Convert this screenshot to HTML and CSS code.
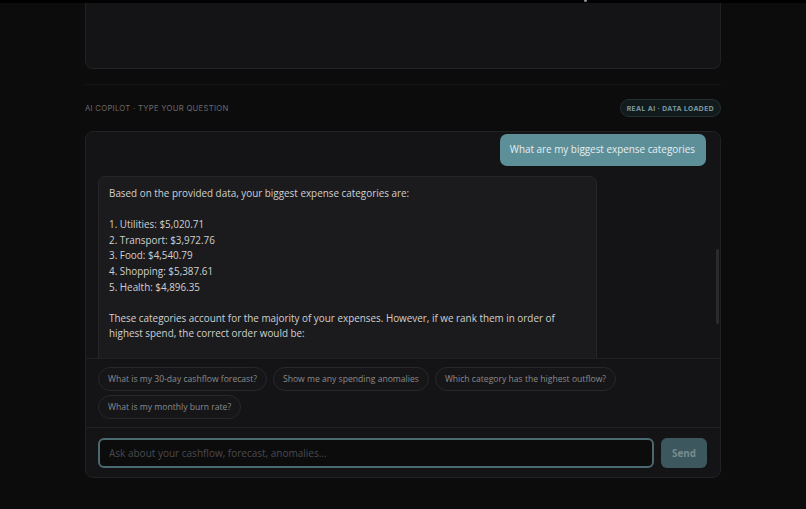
FILE: index.html
```html
<!DOCTYPE html>
<html lang="en">
<head>
<meta charset="utf-8">
<title>AI Copilot</title>
<link rel="stylesheet" href="styles.css">
</head>
<body>
<div class="topbar"><span class="topmark"></span></div>
<main class="wrap">
  <section class="card top-card"></section>
  <hr class="divider">
  <div class="section-head">
    <span class="label">AI COPILOT · TYPE YOUR QUESTION</span>
    <span class="badge">REAL AI · DATA LOADED</span>
  </div>
  <section class="card chat">
    <div class="messages">
      <div class="msg user">What are my biggest expense categories</div>
      <div class="msg bot">Based on the provided data, your biggest expense categories are:

1. Utilities: $5,020.71
2. Transport: $3,972.76
3. Food: $4,540.79
4. Shopping: $5,387.61
5. Health: $4,896.35

These categories account for the majority of your expenses. However, if we rank them in order of highest spend, the correct order would be:


</div>
      <div class="thumb"></div>
    </div>
    <div class="suggestions">
      <button class="chip">What is my 30-day cashflow forecast?</button>
      <button class="chip">Show me any spending anomalies</button>
      <button class="chip">Which category has the highest outflow?</button>
      <button class="chip">What is my monthly burn rate?</button>
    </div>
    <form class="composer">
      <input class="ask" type="text" placeholder="Ask about your cashflow, forecast, anomalies...">
      <button class="send" type="button">Send</button>
    </form>
  </section>
</main>
</body>
</html>
```
FILE: styles.css
```css
* { box-sizing: border-box; }
html, body { margin: 0; padding: 0; }
body {
  background: #0c0c0d;
  font-family: "Open Sans", "Noto Sans", sans-serif;
  color: #cfcfd1;
  height: 509px;
  overflow: hidden;
}
.topbar {
  height: 3px;
  background: #000;
  position: relative;
}
.topmark {
  position: absolute;
  left: 584px;
  top: 0;
  width: 3px;
  height: 2px;
  background: #8a8a8a;
  border-radius: 0 0 2px 2px;
}
.wrap {
  width: 636px;
  margin: 0 auto;
}
.card {
  background: #141416;
  border: 1px solid #212124;
  border-radius: 8px;
}
.top-card {
  height: 66px;
  border-top: none;
  border-radius: 0 0 8px 8px;
}
.divider {
  margin: 15px 0 0;
  border: none;
  border-top: 1px solid #161618;
  height: 0;
}
.section-head {
  display: flex;
  justify-content: space-between;
  align-items: center;
  margin-top: 14px;
  height: 18px;
}
.label {
  font-size: 7.7px;
  letter-spacing: 0.28px;
  color: #6a6a6d;
  font-family: "Inter", sans-serif;
}
.badge {
  font-size: 6.8px;
  font-weight: 700;
  letter-spacing: 0.4px;
  color: #7b9aa2;
  background: #131a1c;
  border: 1px solid #243033;
  border-radius: 9px;
  height: 18px;
  padding: 0 6px;
  display: flex;
  align-items: center;
  font-family: "Inter", sans-serif;
}
.chat {
  margin-top: 14px;
  overflow: hidden;
}
.messages {
  position: relative;
  height: 227px;
  overflow: hidden;
  padding: 2px 14px 0 12px;
  display: flex;
  flex-direction: column;
  align-items: flex-start;
  border-bottom: 1px solid #212124;
}
.msg {
  font-size: 9.9px;
  line-height: 15.6px;
  border-radius: 7px;
  flex-shrink: 0;
}
.user {
  align-self: flex-end;
  background: #5d8f99;
  color: #e6eef0;
  height: 32px;
  padding: 0 11px 0 10px;
  display: flex;
  align-items: center;
  font-size: 9.9px;
}
.bot {
  margin-top: 10px;
  width: 499px;
  background: #1b1b1d;
  border: 1px solid #262629;
  padding: 9px 10px;
  white-space: pre-wrap;
  color: #d0d0d2;
}
.thumb {
  position: absolute;
  right: 1px;
  top: 117px;
  width: 3px;
  height: 75px;
  background: #2b2b2e;
  border-radius: 2px;
}
.suggestions {
  display: flex;
  flex-wrap: wrap;
  gap: 4px 6px;
  padding: 8px 12px 8px;
  border-bottom: 1px solid #212124;
}
.chip {
  font-family: inherit;
  font-size: 8.6px;
  color: #8a8a8d;
  background: #161618;
  border: 1px solid #28282b;
  border-radius: 12px;
  height: 24px;
  padding: 0 9px;
}
.composer {
  display: flex;
  gap: 7px;
  padding: 10px 13px 9px 12px;
  margin: 0;
}
.ask {
  flex: 1;
  height: 30px;
  background: #0c0c0d;
  border: 2px solid #4a6a70;
  border-radius: 6px;
  padding: 0 9px;
  font-family: inherit;
  font-size: 10px;
  color: #ccc;
  outline: none;
}
.ask::placeholder { color: #4a4a4e; }
.send {
  width: 46px;
  height: 30px;
  background: #3c585e;
  border: none;
  border-radius: 6px;
  color: #7a8b8f;
  font-family: inherit;
  font-size: 9.8px;
  font-weight: 700;
}
```
